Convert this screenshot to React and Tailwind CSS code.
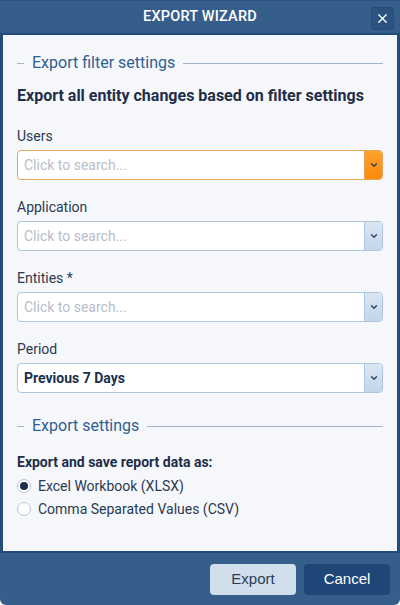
import { X, ChevronDown } from 'lucide-react';
import { useState } from 'react';

const Legend = ({ title }) => (
  <div className="flex items-center h-[24px]">
    <span className="w-[7px] h-px bg-[#9fb3ca]" />
    <span className="ml-[8px] text-[16px] text-[#2f5f90] leading-none">{title}</span>
    <span className="flex-1 h-px bg-[#9fb3ca] ml-[8px]" />
  </div>
);

const SearchSelect = ({ label, value, placeholder = 'Click to search...', active }) => (
  <div className="flex flex-col">
    <label className="text-[14px] text-[#2b3a52] h-[20px] leading-[20px]">{label}</label>
    <div
      className={`mt-[4px] flex h-[30px] rounded-[4px] border bg-white overflow-hidden ${
        active ? 'border-[#e3a557]' : 'border-[#adc6df]'
      }`}
    >
      <div className="flex-1 flex items-center pl-[6px] text-[14px]">
        {value ? (
          <span className="font-bold text-[#1c2f4d]">{value}</span>
        ) : (
          <span className="text-[#b8bec8]">{placeholder}</span>
        )}
      </div>
      <div
        className={`w-[18px] flex items-center justify-center border-l ${
          active
            ? 'bg-gradient-to-b from-[#ffa12a] to-[#ff8a05] border-[#e3a557]'
            : 'bg-gradient-to-b from-[#dbe6f2] to-[#c3d5e8] border-[#adc6df]'
        }`}
      >
        <ChevronDown size={10} strokeWidth={3} className="text-[#2a3b55]" />
      </div>
    </div>
  </div>
);

const Radio = ({ checked, label, onClick }) => (
  <div onClick={onClick} className="flex items-center h-[23px] cursor-pointer">
    <span className="w-[14px] h-[14px] rounded-full border border-[#b9c6d6] bg-white flex items-center justify-center">
      {checked && <span className="w-[8px] h-[8px] rounded-full bg-[#1c2f4d]" />}
    </span>
    <span className="ml-[7px] text-[14px] leading-[20px] text-[#2b3a52]">{label}</span>
  </div>
);

export default function App() {
  const [format, setFormat] = useState('xlsx');

  return (
    <div className="w-[400px] h-[605px] bg-white font-['Roboto',sans-serif]">
      <div className="h-full flex flex-col bg-[#365e8a] rounded-b-[6px] overflow-hidden">
        <div className="h-[33px] relative flex items-center justify-center border-t border-[#2c5482]">
          <span className="text-white text-[14.5px] font-medium tracking-[0.2px]">EXPORT WIZARD</span>
          <button
            type="button"
            className="absolute right-[6px] top-[6px] w-[23px] h-[23px] rounded-[3px] bg-[#2c5380] border border-[#274a73] flex items-center justify-center text-white"
          >
            <X size={15} strokeWidth={2.2} />
          </button>
        </div>

        <div className="bg-[#224d7b] px-[3px] py-[2px]">
          <div className="bg-[#f5f7fb] h-[516px] px-[14px] pt-[16px]">
            <Legend title="Export filter settings" />
            <h3 className="mt-[10px] text-[16px] font-bold text-[#1f2e47] leading-[22px]">
              Export all entity changes based on filter settings
            </h3>

            <div className="mt-[19px] flex flex-col gap-[17px]">
              <SearchSelect label="Users" active />
              <SearchSelect label="Application" />
              <SearchSelect label="Entities *" />
              <SearchSelect label="Period" value="Previous 7 Days" />
            </div>

            <div className="mt-[21px]">
              <Legend title="Export settings" />
            </div>
            <p className="mt-[14px] text-[14px] font-bold text-[#1f2e47] leading-[20px]">
              Export and save report data as:
            </p>
            <div className="mt-[2px] flex flex-col">
              <Radio checked={format === 'xlsx'} label="Excel Workbook (XLSX)" onClick={() => setFormat('xlsx')} />
              <Radio checked={format === 'csv'} label="Comma Separated Values (CSV)" onClick={() => setFormat('csv')} />
            </div>
          </div>
        </div>

        <div className="flex-1 flex items-start justify-end gap-[8px] pt-[11px] pr-[10px] font-['Liberation_Sans',Arial,sans-serif]">
          <button type="button" className="w-[86px] h-[31px] rounded-[4px] bg-[#d1deec] text-[#2a3d57] text-[15px]">
            Export
          </button>
          <button type="button" className="w-[86px] h-[31px] rounded-[4px] bg-[#1e4777] text-white text-[15px]">
            Cancel
          </button>
        </div>
      </div>
    </div>
  );
}
